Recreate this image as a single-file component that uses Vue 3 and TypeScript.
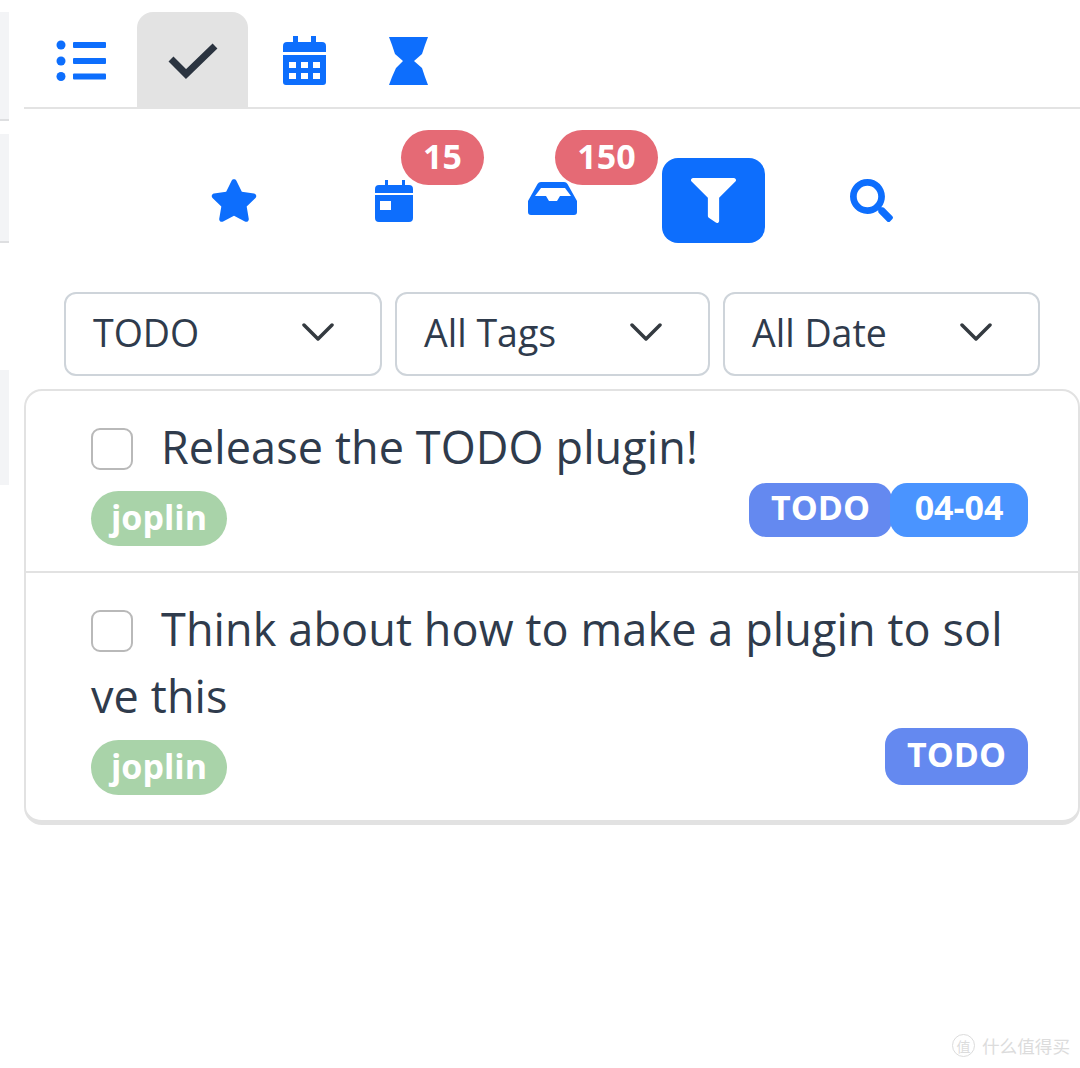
<template>
  <div class="page">
    <aside class="side">
      <div class="side-card lined" />
      <div class="side-card lined" />
      <div class="side-card last" />
    </aside>

    <main class="main">
      <nav class="tabs">
        <div class="tab tab-list">
          <svg width="50" height="42" viewBox="0 0 50 42" fill="#0d6efd">
            <circle cx="5" cy="5" r="4.5" /><circle cx="5" cy="21" r="4.5" /><circle cx="5" cy="36.500" r="4.5" />
            <rect x="17" y="2" width="33" height="6" rx="1" /><rect x="17" y="18" width="33" height="6" rx="1" /><rect x="17" y="33.500" width="33" height="6" rx="1" />
          </svg>
        </div>
        <div class="tab active">
          <svg width="50" height="38" viewBox="0 0 50 38" fill="none" stroke="#2b3440" stroke-width="7" stroke-linejoin="miter">
            <path d="M3 17l15 15L47 4" />
          </svg>
        </div>
        <div class="tab">
          <svg width="43" height="49" viewBox="0 0 43 49" fill="#0d6efd">
            <path fill-rule="evenodd" d="M10 0h5v6h13V0h5v6h6a4 4 0 0 1 4 4v6H0v-6a4 4 0 0 1 4-4h6zM0 19h43v27a3 3 0 0 1-3 3H3a3 3 0 0 1-3-3zM6 26v6h7v-6zm12 0v6h7v-6zm12 0v6h7v-6zM6 37v6h7v-6zm12 0v6h7v-6zm12 0v6h7v-6z" />
          </svg>
        </div>
        <div class="tab tab-last">
          <svg width="39" height="48" viewBox="0 0 39 48" fill="#0d6efd">
            <path d="M0 0h39l-3 8-3 9-8 7 8 7 3 9 3 8H0l3-8 4-9 7-7-8-7-3-9z" />
          </svg>
        </div>
      </nav>

      <div class="tools">
        <button class="tool nudge-3">
          <svg width="48" height="43" viewBox="0 0 576 512" fill="#0d6efd">
            <path d="M259.3 17.8L194 150.2 47.9 171.5c-26.2 3.8-36.7 36.1-17.7 54.6l105.7 103-25 145.5c-4.5 26.3 23.2 46 46.4 33.7L288 439.6l130.7 68.7c23.2 12.2 50.9-7.4 46.4-33.7l-25-145.5 105.7-103c19-18.5 8.5-50.8-17.7-54.6L382 150.2 316.7 17.8c-11.7-23.6-45.6-23.9-57.4 0z" />
          </svg>
        </button>
        <button class="tool nudge-2">
          <svg width="38" height="42" viewBox="0 0 38 42" fill="#0d6efd">
            <path fill-rule="evenodd" d="M10 0h3v5h14V0h3v5h4a4 4 0 0 1 4 4v4H0V9a4 4 0 0 1 4-4h6zM0 15h38v23a4 4 0 0 1-4 4H4a4 4 0 0 1-4-4zM5 21v9h11v-9z" />
          </svg>
          <span class="badge badge-day">{{ dayCount }}</span>
        </button>
        <button class="tool nudge-2">
          <svg class="inbox" width="49" height="33" viewBox="0 0 49 33" fill="#0d6efd">
            <path fill-rule="evenodd" d="M13 0h23a4 4 0 0 1 3.500 2L49 19v11a3 3 0 0 1-3 3H3a3 3 0 0 1-3-3V19L9.500 2A4 4 0 0 1 13 0zM13 6L7 14h11l3 5h8l3-5h11L37 6z" />
          </svg>
          <span class="badge badge-inbox">{{ inboxCount }}</span>
        </button>
        <button class="tool on">
          <svg width="45" height="45" viewBox="0 0 512 512" fill="#fff">
            <path d="M487.976 0H24.028C2.71 0-8.047 25.866 7.058 40.971L192 225.941V432c0 7.831 3.821 15.17 10.237 19.662l80 55.98C298.02 518.69 320 507.493 320 487.98V225.941l184.947-184.97C520.021 25.896 509.338 0 487.976 0z" />
          </svg>
        </button>
        <button class="tool nudge-1">
          <svg width="43" height="43" viewBox="0 0 512 512" fill="#0d6efd">
            <path d="M505 442.7L405.3 343c-4.500-4.500-10.600-7-17-7H372c27.600-35.300 44-79.700 44-128C416 93.100 322.900 0 208 0S0 93.100 0 208s93.100 208 208 208c48.300 0 92.700-16.400 128-44v16.300c0 6.400 2.500 12.500 7 17l99.700 99.700c9.400 9.400 24.600 9.400 33.900 0l28.300-28.300c9.400-9.400 9.400-24.600.1-34zM208 336c-70.700 0-128-57.200-128-128 0-70.700 57.200-128 128-128 70.700 0 128 57.200 128 128 0 70.700-57.200 128-128 128z" />
          </svg>
        </button>
      </div>

      <div class="filters">
        <div v-for="f in filters" :key="f.name" class="select" :style="{ width: f.width + 'px' }">
          <span>{{ f.name }}</span>
          <svg width="32" height="20" viewBox="0 0 32 20" fill="none" stroke="#343a40" stroke-width="3.500" stroke-linecap="round" stroke-linejoin="round">
            <path d="M2 3l14 14L30 3" />
          </svg>
        </div>
      </div>

      <ul class="list">
        <li v-for="item in items" :key="item.title" class="item">
          <div class="title"><span class="check" />{{ item.title }}</div>
          <div class="meta">
            <span class="tag">{{ item.tag }}</span>
            <span class="labels" :class="{ solo: !item.date }">
              <span class="label todo">{{ item.status }}</span>
              <span v-if="item.date" class="label date">{{ item.date }}</span>
            </span>
          </div>
        </li>
      </ul>
    </main>

    <div class="watermark">
      <span class="mark">值</span>
      <span>什么值得买</span>
    </div>
  </div>
</template>

<script setup lang="ts">
interface Todo {
  title: string
  tag: string
  status: string
  date: string
}

const dayCount = 15
const inboxCount = 150

const filters = [
  { name: 'TODO', width: 318 },
  { name: 'All Tags', width: 315 },
  { name: 'All Date', width: 317 },
]

const items: Todo[] = [
  { title: 'Release the TODO plugin!', tag: 'joplin', status: 'TODO', date: '04-04' },
  { title: 'Think about how to make a plugin to solve this', tag: 'joplin', status: 'TODO', date: '' },
]
</script>

<style>
html,
body {
  margin: 0;
  background: #fff;
}
</style>

<style scoped>
.page {
  position: relative;
  display: flex;
  width: 1080px;
  height: 1068px;
  overflow: hidden;
  background: #fff;
  font-family: "Open Sans", "Noto Sans CJK SC", sans-serif;
  color: #2f3b4c;
}

.side {
  flex: none;
  width: 9px;
  margin-right: 15px;
  padding-top: 12px;
}

.side-card {
  background: #f3f4f6;
}

.side-card.lined {
  height: 107px;
  margin-bottom: 13px;
  border-bottom: 2px solid #dedfe1;
}

.side-card.last {
  height: 115px;
  margin-top: 127px;
}

.main {
  flex: 1;
  min-width: 0;
}

.tabs {
  display: flex;
  height: 97px;
  margin-top: 12px;
  box-sizing: border-box;
  border-bottom: 2px solid #e3e3e3;
}

.tab {
  display: flex;
  align-items: center;
  justify-content: center;
  width: 112px;
  height: 95px;
  padding-top: 2px;
  box-sizing: border-box;
  border-radius: 16px 16px 0 0;
}

.tab-list {
  width: 113px;
}

.tab-last {
  width: 96px;
}

.tab.active {
  width: 111px;
  background: #e3e3e3;
}

.tools {
  display: flex;
  justify-content: center;
  gap: 56px;
  margin-top: 49px;
  padding-left: 5px;
}

.tool {
  position: relative;
  display: flex;
  align-items: center;
  justify-content: center;
  width: 103px;
  height: 85px;
  padding: 0;
  border: 0;
  border-radius: 16px;
  background: transparent;
  font-family: inherit;
}

.tool.on {
  background: #0d6efd;
}

.nudge-1 svg {
  margin-right: 2px;
}

.nudge-2 svg {
  margin-right: 4px;
}

.nudge-3 svg {
  margin-right: 5px;
}

.tool .inbox {
  margin-bottom: 4px;
}

.badge {
  position: absolute;
  top: -28px;
  height: 55px;
  border-radius: 28px;
  background: #e56a75;
  color: #fff;
  font-size: 34px;
  font-weight: 700;
  line-height: 52px;
  text-align: center;
}

.badge-day {
  left: 57px;
  width: 83px;
}

.badge-inbox {
  left: 52px;
  width: 103px;
}

.filters {
  display: flex;
  gap: 13px;
  margin: 49px 0 0 40px;
}

.select {
  display: flex;
  align-items: center;
  justify-content: space-between;
  height: 84px;
  padding: 0 46px 4px 27px;
  box-sizing: border-box;
  border: 2px solid #ced4da;
  border-radius: 12px;
  font-size: 37.500px;
}

.list {
  margin: 13px 0 0;
  padding: 0;
  list-style: none;
  border: 2px solid #e2e2e2;
  border-bottom-width: 5px;
  border-radius: 18px;
}

.item {
  padding: 22px 50px 25px 65px;
}

.item + .item {
  padding-top: 22px;
  padding-bottom: 25px;
  border-top: 2px solid #e2e2e2;
}

.title {
  margin-right: 15px;
  font-size: 45px;
  letter-spacing: 0.1px;
  line-height: 67px;
  word-break: break-all;
}

.check {
  display: inline-block;
  width: 42px;
  height: 42px;
  margin-right: 28px;
  box-sizing: border-box;
  border: 2px solid #b9b9b9;
  border-radius: 9px;
  vertical-align: -6px;
}

.meta {
  display: flex;
  justify-content: space-between;
  align-items: flex-start;
}

.tag {
  width: 136px;
  height: 55px;
  margin-top: 11px;
  border-radius: 28px;
  background: #a9d3a9;
  color: #fff;
  font-size: 34px;
  font-weight: 700;
  line-height: 53px;
  text-align: center;
}

.labels {
  display: flex;
  margin-top: 3px;
}

.labels.solo {
  margin-top: -1px;
}

.label {
  height: 54px;
  border-radius: 17px;
  color: #fff;
  font-size: 34px;
  font-weight: 700;
  line-height: 48px;
  text-align: center;
}

.solo .label {
  height: 57px;
  line-height: 53px;
}

.label.todo {
  width: 143px;
  background: #6489f0;
}

.label.date {
  width: 138px;
  margin-left: -2px;
  background: #4a94ff;
}

.watermark {
  position: absolute;
  right: 10px;
  bottom: 10px;
  display: flex;
  align-items: center;
  gap: 7px;
  color: #dcdcdc;
  font-size: 17.600px;
}

.mark {
  display: flex;
  align-items: center;
  justify-content: center;
  width: 21px;
  height: 21px;
  border: 1px solid #dcdcdc;
  border-radius: 50%;
  font-size: 14px;
}
</style>
